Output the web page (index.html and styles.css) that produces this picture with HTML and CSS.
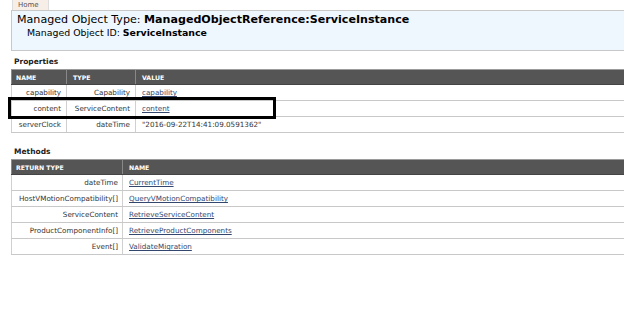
FILE: index.html
```html
<!DOCTYPE html>
<html lang="en">
<head>
  <meta charset="UTF-8" />
  <title>Managed Object Browser</title>
  <link rel="stylesheet" href="styles.css">
</head>
<body>
  <div class="nav">
    <a class="tab" href="#">Home</a>
  </div>
  <div class="header">
    <div class="mo-type">Managed Object Type: <strong>ManagedObjectReference:ServiceInstance</strong></div>
    <div class="mo-id">Managed Object ID: <strong>ServiceInstance</strong></div>
  </div>

  <h3>Properties</h3>
  <table class="grid props">
    <tr><th class="c-name">Name</th><th class="c-type">Type</th><th>Value</th></tr>
    <tr><td class="r">capability</td><td class="r">Capability</td><td><a href="#">capability</a></td></tr>
    <tr><td class="r">content</td><td class="r">ServiceContent</td><td><a href="#">content</a></td></tr>
    <tr><td class="r">serverClock</td><td class="r">dateTime</td><td>"2016-09-22T14:41:09.0591362"</td></tr>
  </table>

  <h3 class="methods-title">Methods</h3>
  <table class="grid methods">
    <tr><th class="c-ret">Return Type</th><th>Name</th></tr>
    <tr><td class="r">dateTime</td><td><a href="#">CurrentTime</a></td></tr>
    <tr><td class="r">HostVMotionCompatibility[]</td><td><a href="#">QueryVMotionCompatibility</a></td></tr>
    <tr><td class="r">ServiceContent</td><td><a href="#">RetrieveServiceContent</a></td></tr>
    <tr><td class="r">ProductComponentInfo[]</td><td><a href="#">RetrieveProductComponents</a></td></tr>
    <tr><td class="r">Event[]</td><td><a href="#">ValidateMigration</a></td></tr>
  </table>

  <!-- highlight drawn over the "content" row -->
  <div class="outline"></div>
</body>
</html>
```

FILE: styles.css
```css
body {
  margin: 0 0 0 11px;
  background: #fff;
  font-family: "DejaVu Sans", Verdana, sans-serif;
  font-size: 7.2px;
  color: #333;
}
.nav {
  height: 10px;
}
.tab {
  display: inline-block;
  margin-left: 1px;
  padding: 0 9px 0 5px;
  height: 10px;
  line-height: 10px;
  font-size: 7px;
  color: #555;
  text-decoration: none;
  background: #f7eee8;
  border: 1px solid #ddd;
  border-top: none;
  border-bottom: none;
}
.header {
  height: 39px;
  background: #eef6fe;
  border-top: 1px solid #c8c8c8;
  border-bottom: 1px solid #c8c8c8;
  border-left: 1px solid #c8c8c8;
  padding-left: 5px;
  color: #000;
}
.mo-type {
  font-size: 11.1px;
  line-height: 14px;
  padding-top: 2px;
}
.mo-id {
  font-size: 9.4px;
  line-height: 12px;
  padding-left: 10px;
}
h3 {
  margin: 0;
  padding: 6px 0 2px 3px;
  font-size: 7.5px;
  line-height: 10px;
  height: 10px;
  color: #222;
}
.methods-title {
  margin-top: 8px;
}
table.grid {
  width: 100%;
  border-collapse: collapse;
}
.grid th {
  background: #555;
  color: #fff;
  font-size: 6.2px;
  text-transform: uppercase;
  text-align: left;
  font-weight: bold;
  height: 14px;
  padding: 0 4px;
  border-top: 1px solid #9a9a9a;
  border-bottom: 1px solid #444;
  border-left: 1px solid #888;
}
.grid th + th {
  padding-left: 6px;
}
.grid td {
  height: 15px;
  padding: 0 5px 0 6px;
  border-bottom: 1px solid #c8c8c8;
  border-left: 1px solid #d0d0d0;
  white-space: nowrap;
}
.grid td.r {
  text-align: right;
}
.methods td.r {
  padding-right: 4px;
}
.grid a {
  color: #33476e;
}
.c-name {
  width: 46px;
}
.c-type {
  width: 58px;
}
.c-ret {
  width: 102px;
}
.outline {
  position: absolute;
  left: 8px;
  top: 97px;
  width: 262px;
  height: 16px;
  border: 3px solid #000;
}
```
